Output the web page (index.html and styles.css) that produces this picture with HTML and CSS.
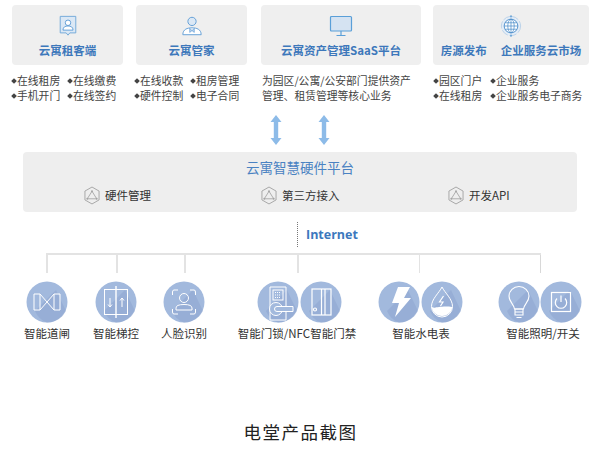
FILE: index.html
```html
<!DOCTYPE html>
<html lang="zh">
<head>
<meta charset="utf-8">
<title>电堂产品截图</title>
<link rel="stylesheet" href="styles.css">
</head>
<body>
<svg class="defs" width="0" height="0" aria-hidden="true">
  <defs>
    <symbol id="hex" viewBox="0 0 17 20">
      <path d="M8.5 1 16 5.3v9.4L8.500 19 1 14.700V5.300Z" fill="none" stroke="#a3a3a3" stroke-width="1"/>
      <path d="M8.500 5.500 13.500 13.500H3.500Z" fill="none" stroke="#a3a3a3" stroke-width=".9"/>
      <circle cx="8.500" cy="5.500" r="1" fill="#a3a3a3"/><circle cx="13.500" cy="13.500" r="1" fill="#a3a3a3"/><circle cx="3.500" cy="13.500" r="1" fill="#a3a3a3"/>
    </symbol>
    <symbol id="updown" viewBox="0 0 12 30">
      <path d="M6 0 11.500 7H8.200V23H11.500L6 30 .5 23H3.800V7H.5Z" fill="#8dbbe8"/>
    </symbol>
    <symbol id="disc" viewBox="0 0 42 42">
      <circle cx="21" cy="21" r="20.500" fill="#a2b9dd"/>
      <path d="M9 30 30 9 40 30A20.500 20.500 0 0 1 21 41.500 20.500 20.500 0 0 1 9 30Z" fill="#8ea6d0" opacity=".55"/>
    </symbol>
  </defs>
</svg>
<main class="page">
  <section class="apps">
    <div class="app app-a">
      <div class="card">
        <svg class="card-icon" viewBox="0 0 24 24"><path d="M3.500 1.500H20.500V19.500H14L12 22 10 19.500H3.500Z" fill="#dbe8f5" stroke="#6ea6d8"/><circle cx="12" cy="8.500" r="3" fill="#fff" stroke="#5c9ad4"/><path d="M6.500 16.500C6.500 13 9 12 12 12S17.500 13 17.500 16.500Z" fill="#fff" stroke="#5c9ad4"/></svg>
        <h2 class="card-title">云寓租客端</h2>
      </div>
      <ul class="points">
        <li>在线租房</li><li>在线缴费</li><li>手机开门</li><li>在线签约</li>
      </ul>
    </div>
    <div class="app app-b">
      <div class="card">
        <svg class="card-icon" viewBox="0 0 24 24"><circle cx="12" cy="7" r="4.500" fill="#dbe8f5" stroke="#5c9ad4"/><path d="M2 21.500C2 15.500 7 14 12 14S22 15.500 22 21.500Z" fill="#fff" stroke="#5c9ad4"/><path d="M9.500 14.500 12 17 14.500 14.500V19L12 17 9.500 19Z" fill="#bcd5ee" stroke="#5c9ad4" stroke-width=".7"/></svg>
        <h2 class="card-title">云寓管家</h2>
      </div>
      <ul class="points">
        <li>在线收款</li><li>租房管理</li><li>硬件控制</li><li>电子合同</li>
      </ul>
    </div>
    <div class="app app-c">
      <div class="card">
        <svg class="card-icon card-icon-wide" viewBox="0 0 24 24"><rect x="1.500" y="2.500" width="21" height="14.500" rx="1" fill="#d5e3f2" stroke="#5a9fd8" stroke-width="1.200"/><path d="M12 17V21M7.500 21.500H16.500" stroke="#5a9fd8" stroke-width="1.200"/></svg>
        <h2 class="card-title">云寓资产管理SaaS平台</h2>
      </div>
      <p class="desc">为园区/公寓/公安部门提供资产<br>管理、租赁管理等核心业务</p>
    </div>
    <div class="app app-d">
      <div class="card">
        <svg class="card-icon" viewBox="0 0 24 24"><circle cx="12" cy="12" r="10.500" fill="#e4edf7" stroke="#b8d0e8" stroke-dasharray="8 2"/><circle cx="12" cy="12" r="7.500" fill="#fff" stroke="#4a8cc9"/><ellipse cx="12" cy="12" rx="3.500" ry="7.500" fill="none" stroke="#4a8cc9" stroke-width=".8"/><path d="M4.500 12H19.500M5.500 8.500H18.500M5.500 15.500H18.500M12 4.500V19.500" stroke="#4a8cc9" stroke-width=".8"/><circle cx="12" cy="1.500" r="1.100" fill="#6ea6d8"/><circle cx="12" cy="22.500" r="1.100" fill="#6ea6d8"/></svg>
        <div class="card-pair"><h2 class="card-title">房源发布</h2><h2 class="card-title">企业服务云市场</h2></div>
      </div>
      <ul class="points points-wide">
        <li>园区门户</li><li>企业服务</li><li>在线租房</li><li>企业服务电子商务</li>
      </ul>
    </div>
  </section>

  <div class="arrows">
    <svg class="arrow"><use href="#updown"/></svg>
    <svg class="arrow"><use href="#updown"/></svg>
  </div>

  <section class="platform">
    <h2 class="platform-title">云寓智慧硬件平台</h2>
    <div class="features">
      <div class="feature feature-1"><svg class="hex"><use href="#hex"/></svg>硬件管理</div>
      <div class="feature feature-2"><svg class="hex"><use href="#hex"/></svg>第三方接入</div>
      <div class="feature feature-3"><svg class="hex"><use href="#hex"/></svg>开发API</div>
    </div>
  </section>

  <div class="link-row">
    <span class="dots"></span>
    <span class="internet">Internet</span>
  </div>

  <div class="tree">
    <span class="branch b1"></span><span class="branch b2"></span><span class="branch b3"></span><span class="branch b4"></span><span class="branch b5"></span>
  </div>

  <section class="devices">
    <figure class="device d1">
      <svg class="disc" viewBox="0 0 42 42"><use href="#disc"/><g fill="none" stroke="#fff" stroke-width="1"><path d="M8 13H14V29H8ZM34 13H28V29H34ZM14 13 21 21 14 29M28 13 21 21 28 29"/></g></svg>
      <figcaption>智能道闸</figcaption>
    </figure>
    <figure class="device d2">
      <svg class="disc" viewBox="0 0 42 42"><use href="#disc"/><g fill="none" stroke="#fff" stroke-width="1"><rect x="9.500" y="8.500" width="23" height="25"/><path d="M21 5V37" stroke-width="1.400"/><path d="M15 17V26M13 23.500 15 26 17 23.500M27 26V17M25 19.500 27 17 29 19.500"/></g></svg>
      <figcaption>智能梯控</figcaption>
    </figure>
    <figure class="device d3">
      <svg class="disc" viewBox="0 0 42 42"><use href="#disc"/><g fill="none" stroke="#fff" stroke-width="1"><path d="M15 9H11Q9.500 9 9.500 11V14M27 9H31Q32.500 9 32.500 11V14M15 33H11Q9.500 33 9.500 31V28M27 33H31Q32.500 33 32.500 31V28"/><circle cx="21" cy="17" r="4.500"/><path d="M13 29V27Q13 23.500 21 23.500T29 27V29Z"/></g></svg>
      <figcaption>人脸识别</figcaption>
    </figure>
    <figure class="device d4">
      <div class="disc-pair">
        <svg class="disc" viewBox="0 0 42 42"><use href="#disc"/><g fill="none" stroke="#fff" stroke-width="1"><path d="M13 6H29V39H13Z"/><rect x="16" y="9" width="10" height="10"/><path d="M18 11.500H24M18 14H24M18 16.500H24" stroke-dasharray="1 1"/><circle cx="19" cy="28" r="6.500" fill="#a2b9dd"/><path d="M36 25.500H20A2.500 2.500 0 0 0 20 30.500H36Z" fill="#a2b9dd"/></g></svg>
        <svg class="disc" viewBox="0 0 42 42"><use href="#disc"/><g fill="none" stroke="#fff" stroke-width="1.200"><rect x="12" y="8" width="19" height="26"/><path d="M21.500 8V34M25 8V34"/><circle cx="15" cy="28.500" r="1.500"/></g></svg>
      </div>
      <figcaption>智能门锁/NFC智能门禁</figcaption>
    </figure>
    <figure class="device d5">
      <div class="disc-pair">
        <svg class="disc" viewBox="0 0 42 42"><use href="#disc"/><path d="M20 6H32L26 17H33L17 36 21 22H14Z" fill="#fff"/></svg>
        <svg class="disc" viewBox="0 0 42 42"><use href="#disc"/><path d="M21 6C18 12 10.500 18 10.500 25.500A10.500 10.500 0 0 0 31.500 25.500C31.500 18 24 12 21 6Z" fill="none" stroke="#fff"/><path d="M10.600 26C15 28 18 24.500 31.400 26A10.500 10.500 0 0 1 10.600 26Z" fill="#fff"/><path d="M22.500 15 18.500 21H22L19.500 25" fill="none" stroke="#fff" stroke-width="1.200"/></svg>
      </div>
      <figcaption>智能水电表</figcaption>
    </figure>
    <figure class="device d6">
      <div class="disc-pair">
        <svg class="disc" viewBox="0 0 42 42"><use href="#disc"/><g fill="none" stroke="#fff" stroke-width="1.100"><path d="M16.500 28C16 23 11 21 11 15A10 9.500 0 0 1 31 15C31 21 26 23 25.500 28Z"/><path d="M17 28H25V34H17ZM17 31H25M18.500 36.500H23.500"/></g></svg>
        <svg class="disc" viewBox="0 0 42 42"><use href="#disc"/><g fill="none" stroke="#fff" stroke-width="1.200"><rect x="11.500" y="11.500" width="19" height="19"/><path d="M17 17.500A5.700 5.700 0 1 0 25 17.500M21 14.500V21"/></g></svg>
      </div>
      <figcaption>智能照明/开关</figcaption>
    </figure>
  </section>

  <p class="caption">电堂产品截图</p>
</main>
</body>
</html>
```

FILE: styles.css
```css
* { box-sizing: border-box; }
html, body { margin: 0; padding: 0; background: #fff; }
body {
  width: 601px;
  height: 456px;
  overflow: hidden;
  font-family: "Noto Sans CJK SC", "Liberation Sans", sans-serif;
  color: #333;
}
.defs { display: block; height: 0; }
.page { display: flex; flex-direction: column; }

.apps { display: flex; padding: 5px 0 0 12px; }
.app-a { width: 111px; margin-right: 13px; }
.app-b { width: 111px; margin-right: 14px; }
.app-c { width: 160px; margin-right: 12px; }
.app-d { width: 156px; }
.card {
  height: 60px;
  background: #efefef;
  border-radius: 4px;
  display: flex;
  flex-direction: column;
  align-items: center;
  padding-top: 9px;
}
.card-icon { width: 22px; height: 24px; display: block; }
.card-icon-wide { width: 24px; height: 24px; }
.card-title {
  margin: 4px 0 0;
  font-size: 11.500px;
  line-height: 17px;
  font-weight: 700;
  color: #3d78bb;
  white-space: nowrap;
}
.card-pair { display: flex; gap: 14px; }

.points {
  list-style: none;
  margin: 8px 0 0 -1px;
  padding: 0;
  display: grid;
  grid-template-columns: 56px auto;
  font-size: 10.800px;
  line-height: 15px;
  color: #444;
  white-space: nowrap;
}
.app-a .points { margin-left: 0; }
.points-wide { margin-left: 1px; grid-template-columns: 57px auto; }
.points li { display: flex; align-items: center; gap: 1px; }
.points li::before {
  content: "";
  width: 4px;
  height: 4px;
  background: #444;
  transform: rotate(45deg);
  flex: none;
}
.desc {
  margin: 8px 0 0 1px;
  font-size: 10.800px;
  line-height: 15px;
  color: #444;
  white-space: nowrap;
}

.arrows { display: flex; justify-content: center; gap: 36px; margin: 12px 0 0; padding-right: 1px; }
.arrow { width: 12px; height: 30px; display: block; }

.platform {
  margin: 7px 0 0 23px;
  width: 554px;
  height: 60px;
  background: #eeeeee;
  border-radius: 4px;
  display: flex;
  flex-direction: column;
  align-items: center;
  padding-top: 5px;
}
.platform-title {
  margin: 0;
  font-size: 13.500px;
  line-height: 20px;
  font-weight: 400;
  color: #4a82c2;
}
.features { align-self: stretch; display: flex; margin-top: 8px; padding-left: 61px; }
.feature { display: flex; align-items: center; gap: 5px; font-size: 11.500px; line-height: 20px; color: #333; }
.feature-1 { width: 177px; }
.feature-2 { width: 187px; }
.hex { width: 16px; height: 19px; display: block; flex: none; }

.link-row { display: flex; align-items: center; height: 25px; margin-top: 10px; padding-left: 297px; }
.dots { width: 0; height: 25px; border-left: 1px dotted #777; }
.internet { margin-left: 8px; font-family: "Open Sans", "Noto Sans", sans-serif; font-size: 12.500px; font-weight: 700; color: #3c78bd; }

.tree { display: grid; grid-template-columns: 70px 68px 113px 122px 122px; margin: 6px 0 0 46px; width: 495px; height: 20px; border-top: 2px solid #e3e3e3; }
.branch { border-left: 2px solid #e3e3e3; }
.b5 { border-right: 1px solid #d8d8d8; border-left-width: 1px; }

.devices { display: flex; height: 59px; margin-top: 8px; }
.device { margin: 0; display: flex; flex-direction: column; align-items: center; flex: none; }
.disc { width: 42px; height: 42px; display: block; flex: none; }
.disc-pair { display: flex; gap: 2px; }
.d4 .disc-pair { gap: 1px; margin-left: 4px; }
.d5 .disc-pair { gap: 1px; margin-right: 2px; }
.d6 .disc-pair { gap: 0; margin-right: 6px; }
.device figcaption { margin-top: 2px; font-size: 11.500px; line-height: 17px; color: #333; white-space: nowrap; }
.d1 { width: 46px; margin-left: 24px; }
.d2 { width: 46px; margin-left: 23px; }
.d3 { width: 46px; margin-left: 22px; }
.d4 { width: 120px; margin-left: 30px; }
.d5 { width: 58px; margin-left: 35px; }
.d6 { width: 74px; margin-left: 56px; }

.caption { margin: 80px 0 0; text-align: center; font-size: 17.500px; line-height: 24px; letter-spacing: 1.500px; color: #222; }
```
